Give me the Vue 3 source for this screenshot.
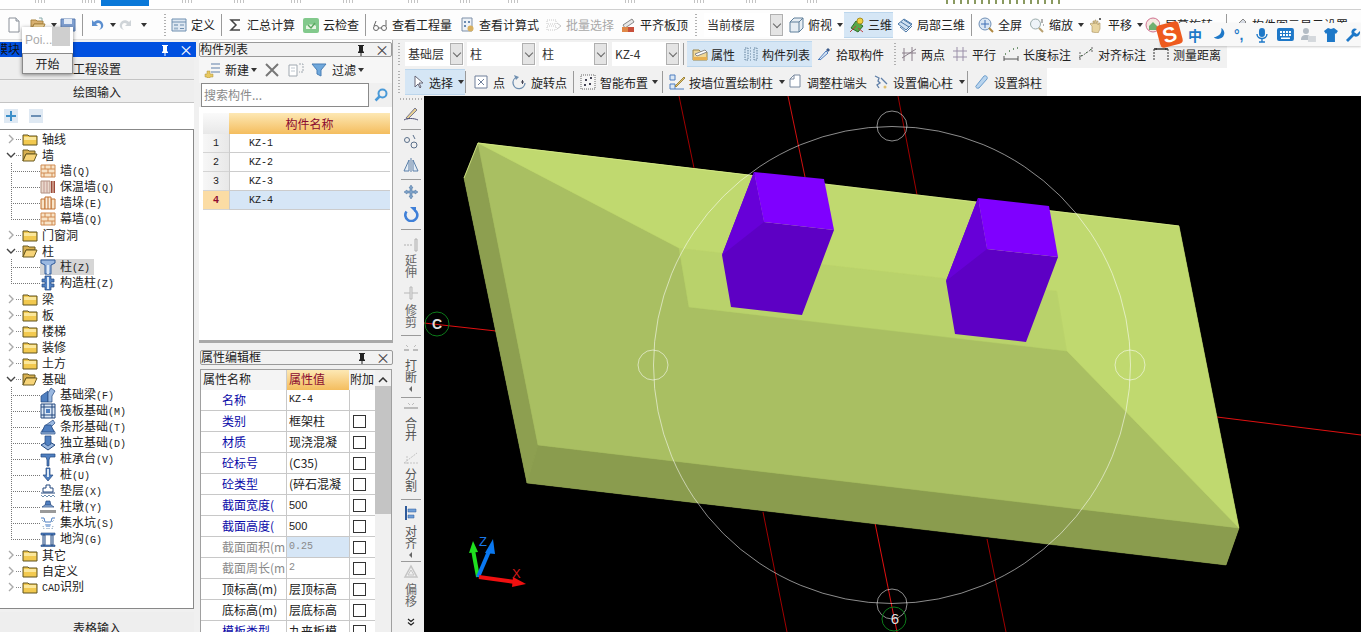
<template>
  <div class="app">
    <div class="menu">
      <span v-for="m in menus" :key="m.x" :class="['menu-cell', { active: m.on, tick: m.tick, olive: m.olive }]" :style="{ width: m.w + 'px' }"></span>
    </div>

    <div class="tb row1">
      <div v-for="c in row1" :key="c.x" :class="cellClass(c)" :style="{ width: c.w + 'px' }">
        <template v-if="c.combo"><span class="combo-text">{{ c.combo }}</span><span class="combo-arrow"></span></template>
        <svg v-if="c.i" class="ic" viewBox="0 0 16 16" v-html="icons[c.i]"></svg>
        <span v-if="c.t" class="lbl">{{ c.t }}</span>
      </div>
    </div>

    <div class="body">
      <aside class="left">
        <div class="title active"><span class="title-text nav-text">模块</span><svg class="pin" viewBox="0 0 10 12"><path d="M2 1h6v1H7v5l1 1v1H5.500v3h-1V9H2V8l1-1V2H2z" fill="#fff"/></svg><span class="close wht">×</span></div>
        <div class="tab">工程设置</div>
        <div class="tab">绘图输入</div>
        <div class="tree-tools">
          <span class="pm">
            <svg viewBox="0 0 14 14"><path d="M2 6h4V2h2v4h4v2H8v4H6V8H2z" fill="#3d8fc9"/></svg>
          </span>
          <span class="pm">
            <svg viewBox="0 0 14 14"><path d="M2 6h10v2H2z" fill="#6b8fb5"/></svg>
          </span>
        </div>
        <div class="tree">
          <template v-for="n in tree" :key="n.t">
            <div class="node">
              <svg class="chev" viewBox="0 0 10 10">
                <path v-if="n.kids" d="M1 3l4 4 4-4" fill="none" stroke="#444" stroke-width="1.400"/>
                <path v-else d="M3 1l4 4-4 4" fill="none" stroke="#aaa" stroke-width="1.400"/>
              </svg>
              <span class="dots"></span>
              <svg class="ic" viewBox="0 0 16 16" v-html="n.kids ? icons.folderOpen : icons.folder"></svg>
              <span class="node-text"><span v-if="n.pre" class="key">{{ n.pre }}</span>{{ n.t }}</span>
            </div>
            <div v-for="(k, i) in n.kids" :key="k.t" class="kid">
              <span :class="['elbow', { last: i === n.kids.length - 1 }]"></span>
              <span :class="['kid-body', { sel: k.sel }]">
                <svg class="ic" viewBox="0 0 16 16" v-html="icons[k.i]"></svg>
                <span class="kid-text">{{ k.t }}<span class="key">{{ k.k }}</span></span>
              </span>
            </div>
          </template>
        </div>
        <div class="tab last-tab">表格输入</div>
      </aside>

      <section class="mid">
        <div class="comp-panel">
          <div class="title"><span class="title-text">构件列表</span><svg class="pin" viewBox="0 0 10 12"><path d="M2 1h6v1H7v5l1 1v1H5.500v3h-1V9H2V8l1-1V2H2z" fill="#222"/></svg><span class="close">×</span></div>
          <div class="comp-tools">
            <svg class="ic" viewBox="0 0 16 16" v-html="icons.newItem"></svg>
            <span class="lbl new-lbl">新建</span><span class="arrow"></span>
            <svg class="ic del" viewBox="0 0 16 16"><path d="M2 2l12 12M14 2L2 14" stroke="#777" stroke-width="2"/></svg>
            <svg class="ic cp" viewBox="0 0 16 16" v-html="icons.copy"></svg>
            <svg class="ic fl" viewBox="0 0 16 16"><path d="M1 2h14L10 8v6l-4-2V8z" fill="#6fa8dc" stroke="#4a7fb5"/></svg>
            <span class="lbl flt-lbl">过滤</span><span class="arrow"></span>
          </div>
          <div class="search">
            <div class="search-input">搜索构件...</div>
            <div class="search-btn">
              <svg viewBox="0 0 16 16" width="16" height="16"><circle cx="9.500" cy="6.500" r="4" fill="none" stroke="#4a9ad8" stroke-width="2"/><path d="M6.500 9.500L2.500 13.500" stroke="#4a9ad8" stroke-width="2.500"/></svg>
            </div>
          </div>
          <div class="comp-table">
            <div class="ct-corner"></div><div class="ct-head">构件名称</div>
            <template v-for="(r, i) in comps" :key="r">
              <div :class="['ct-num', { on: i === 3 }]">{{ i + 1 }}</div>
              <div :class="['ct-cell', { on: i === 3 }]">{{ r }}</div>
            </template>
          </div>
        </div>

        <div class="prop-panel">
          <div class="title"><span class="title-text">属性编辑框</span><svg class="pin" viewBox="0 0 10 12"><path d="M2 1h6v1H7v5l1 1v1H5.500v3h-1V9H2V8l1-1V2H2z" fill="#222"/></svg><span class="close">×</span></div>
          <div class="prop-wrap">
            <div class="prop-table">
              <div class="ph">属性名称</div><div class="ph val-h">属性值</div><div class="ph extra-h">附加</div>
              <template v-for="p in props" :key="p.n">
                <div :class="['pn', { dis: p.dis, plain: p.plain }]">{{ p.n }}</div>
                <div :class="['pv', { dis: p.dis, hl: p.hl, mono: p.mono, sans: p.sans }]">{{ p.v }}</div>
                <div class="pc"><span v-if="!p.noChk" class="chk"></span></div>
              </template>
            </div>
            <div class="sb">
              <svg class="sb-up" viewBox="0 0 10 6"><path d="M1 5l4-4 4 4" fill="none" stroke="#333" stroke-width="1.500"/></svg>
              <div class="sb-thumb"></div>
            </div>
          </div>
        </div>
      </section>

      <main class="work">
        <div class="tb row2">
          <div v-for="c in row2" :key="c.x" :class="cellClass(c)" :style="{ width: c.w + 'px' }">
            <template v-if="c.combo"><span class="combo-text">{{ c.combo }}</span><span class="combo-arrow"></span></template>
            <svg v-if="c.i" class="ic" viewBox="0 0 16 16" v-html="icons[c.i]"></svg>
            <span v-if="c.t" class="lbl">{{ c.t }}</span>
          </div>
        </div>
        <div class="tb row3">
          <div v-for="c in row3" :key="c.x" :class="cellClass(c)" :style="{ width: c.w + 'px' }">
            <svg v-if="c.i" class="ic" viewBox="0 0 16 16" v-html="icons[c.i]"></svg>
            <span v-if="c.t" class="lbl">{{ c.t }}</span>
          </div>
        </div>
        <div class="stage">
          <div class="vbar">
            <div v-for="c in vbar" :key="c.x" :class="['vcell', { vsep: c.sep, vgrip: c.grip }]" :style="{ height: c.w + 'px' }">
              <svg v-if="c.i" class="ic" viewBox="0 0 16 16" v-html="icons[c.i]"></svg>
              <span v-if="c.t" :class="['vtext', { dark: c.dark }]">{{ c.t }}</span>
              <span v-if="c.tri" class="vtri"></span>
              <svg v-if="c.more" viewBox="0 0 8 8" width="8" height="8"><path d="M1 1l3 2.500L7 1M1 4.500L4 7l3-2.500" fill="none" stroke="#222" stroke-width="1.200"/></svg>
            </div>
          </div>
          <svg class="view" viewBox="424 96 937 536" width="937" height="536">
            <g fill="none">
              <path d="M679 96L694 168" stroke="#a00000"/>
              <path d="M788 96L805 177" stroke="#d01010"/>
              <path d="M898 96L917 195" stroke="#a00000"/>
              <path d="M424 323L496 331" stroke="#e01010"/>
              <path d="M1217 417L1361 435" stroke="#e01010"/>
              <path d="M763 512L787 632" stroke="#a00000"/>
              <path d="M875 523L897 632" stroke="#e01010"/>
              <path d="M987 539L1006 632" stroke="#a00000"/>
            </g>
            <!-- silhouette first, so the faces leave no dark seams between them -->
            <polygon points="478,143 1179,226 1239,528 1226,565 527,483 464,178" fill="#a9bf62" />
            <polygon points="478,143 464,178 527,483 538,445" fill="#8d9f50" stroke="#8d9f50" stroke-width=".5" />
            <polygon points="538,445 1239,528 1226,565 527,483" fill="#8a9c4e" stroke="#8a9c4e" stroke-width=".5" />
            <polygon points="478,143 679,248 689,307 1067,351 1239,528 538,445" fill="#a9bf62" stroke="#a9bf62" stroke-width=".5" />
            <polygon points="679,248 1057,291 1067,351 689,307" fill="#b9d26b" stroke="#b9d26b" stroke-width=".5" />
            <polygon points="478,143 1179,226 1239,528 1067,351 1057,291 679,248" fill="#c0d96f" stroke="#c0d96f" stroke-width=".5" />
            <path d="M464 178L478 143L1179 226" fill="none" stroke="#d9ee8a" stroke-width="0.800" />

            <circle cx="892" cy="365" r="238.500" fill="none" stroke="#fff" stroke-opacity=".55" />
            <g fill="none" stroke="#fff" stroke-opacity=".55">
              <circle cx="892" cy="126" r="15" />
              <circle cx="1130" cy="365" r="15" />
              <circle cx="653" cy="365" r="15" />
              <circle cx="892" cy="604" r="15" />
            </g>

            <polygon points="754,172 764,222 834,230 802,315 731,307 722,255" fill="#5d00c4" />
            <polygon points="754,172 764,222 722,255" fill="#6700d8" />
            <polygon points="754,172 824,179 834,230 764,222" fill="#7f00ff" />
            <polygon points="978,198 987,249 1058,257 1026,342 955,334 946,281" fill="#5d00c4" />
            <polygon points="978,198 987,249 946,281" fill="#6700d8" />
            <polygon points="978,198 1049,206 1058,257 987,249" fill="#7f00ff" />

            <g fill="none" stroke="#0d7a1a">
              <circle cx="437" cy="324" r="12" />
              <circle cx="894" cy="619" r="12" />
            </g>
            <text x="437" y="329" class="mark">C</text>
            <text x="895" y="624" class="mark six">6</text>

            <path d="M478 577L473 550" stroke="#1fe01f" stroke-width="4" />
            <polygon points="473,541 469,553 478,552" fill="#1fe01f" />
            <path d="M478 577L490 549" stroke="#0a78f0" stroke-width="4" />
            <polygon points="493,539 485,553 495,554" fill="#0a78f0" />
            <path d="M479 577L515 582" stroke="#f01010" stroke-width="4" />
            <polygon points="526,584 513,577 512,587" fill="#f01010" />
            <text x="479" y="546" class="ax z">Z</text>
            <text x="512" y="578" class="ax x">X</text>
          </svg>
        </div>
      </main>
    </div>

    <div class="popup">
      <div class="pop-top"><span class="pop-name">Poi...</span><span class="pop-thumb"></span></div>
      <div class="pop-btn">开始</div>
    </div>

    <div class="sogou">
      <span class="sg-logo"><span>S</span></span>
      <span class="sg-zh">中</span>
      <svg viewBox="0 0 16 16" width="15" height="15"><path d="M11 1c1 5-2 9-8 10 3 3 10 2 11-3 1-3-1-6-3-7z" fill="#1e78c8"/></svg>
      <span class="sg-punc">°,</span>
      <svg viewBox="0 0 16 16" width="16" height="16"><rect x="5" y="1" width="6" height="9" rx="3" fill="#1e78c8"/><path d="M3 7c0 6 10 6 10 0M8 12v3M5 15h6" fill="none" stroke="#1e78c8" stroke-width="1.400"/></svg>
      <svg viewBox="0 0 17 14" width="17" height="14"><rect width="17" height="13" rx="2" fill="#1e78c8"/><path d="M3 3h2v2H3zM6 3h2v2H6zM9 3h2v2H9zM12 3h2v2h-2zM3 6h2v2H3zM6 6h2v2H6zM9 6h2v2H9zM12 6h2v2h-2zM4 9.500h9V11H4z" fill="#fff"/></svg>
      <svg viewBox="0 0 16 16" width="16" height="16"><circle cx="6" cy="4" r="3" fill="#b4bcc4"/><path d="M1 13c0-4 2-5 5-5s5 1 5 5z" fill="#b4bcc4"/><rect x="8" y="9" width="8" height="6" fill="#d4d8dc"/></svg>
      <svg viewBox="0 0 16 16" width="16" height="16"><path d="M5 1l3 1 3-1 4 3-2 3-1-1v9H4V6L3 7 1 4z" fill="#1e78c8"/></svg>
      <svg viewBox="0 0 16 16" width="16" height="16"><path d="M15 4l-3 3-3-2 3-3c-3-2-7 1-5 5l-6 6 2 2 6-6c3 2 7-1 6-5z" fill="#1e78c8"/></svg>
    </div>
  </div>
</template>

<script setup>
function cells(list) {
  return list.slice(0, -1).map((c, i) => ({ ...c, w: list[i + 1].x - c.x }))
}

function cellClass(c) {
  return ['cell', {
    on: c.on, sep: c.sep, grip: c.grip, arrowcell: c.a, combo: c.combo, dis: c.dis,
  }]
}

// only the lower edge of the menu bar is left in the picture
const menus = cells([
  { x: 0 }, { x: 35, tick: 1 }, { x: 47 }, { x: 82, tick: 1 }, { x: 97 }, { x: 101, on: 1 }, { x: 149 }, { x: 182, tick: 1 }, { x: 194 },
  { x: 234, tick: 1 }, { x: 246 }, { x: 291, tick: 1 }, { x: 303 }, { x: 343, tick: 1 }, { x: 355 }, { x: 408, tick: 1 }, { x: 420 },
  { x: 460, tick: 1 }, { x: 472 }, { x: 508, tick: 1 }, { x: 520 }, { x: 625, tick: 1 }, { x: 637 }, { x: 694, tick: 1 }, { x: 706 },
  { x: 746, tick: 1 }, { x: 758 }, { x: 807, tick: 1 }, { x: 819 }, { x: 946, olive: 1 }, { x: 1063 }, { x: 1361 },
])

const row1 = cells([
  { x: 0 }, { x: 6, i: 'doc' }, { x: 30, i: 'open' }, { x: 49, a: 1 }, { x: 60, i: 'save' },
  { x: 82, sep: 1 }, { x: 89, i: 'undo' }, { x: 108, a: 1 }, { x: 118, i: 'redo' }, { x: 139, a: 1 },
  { x: 163, grip: 1 }, { x: 171, i: 'def', t: '定义' }, { x: 221, sep: 1 }, { x: 227, i: 'sigma', t: '汇总计算' },
  { x: 303, i: 'cloud', t: '云检查' }, { x: 365, sep: 1 }, { x: 372, i: 'glass', t: '查看工程量' },
  { x: 459, i: 'calc', t: '查看计算式' }, { x: 546, i: 'batch', t: '批量选择', dis: 1 }, { x: 620, i: 'flush', t: '平齐板顶' },
  { x: 694, grip: 1 }, { x: 704, combo: '当前楼层' }, { x: 784 }, { x: 788, i: 'cube', t: '俯视' }, { x: 835, a: 1 },
  { x: 844, i: 'tree3d', t: '三维', on: 1 }, { x: 893 }, { x: 897, i: 'local3d', t: '局部三维' }, { x: 971, sep: 1 },
  { x: 978, i: 'full', t: '全屏' }, { x: 1029, i: 'zoom', t: '缩放' }, { x: 1076, a: 1 }, { x: 1088, i: 'pan', t: '平移' },
  { x: 1135, a: 1 }, { x: 1145, i: 'orbit', t: '屏幕旋转' }, { x: 1226, sep: 1 }, { x: 1232, i: 'pencil', t: '构件图元显示设置' }, { x: 1361 },
])

const row2 = cells([
  { x: 397, grip: 1 }, { x: 405, combo: '基础层' }, { x: 464 }, { x: 467, combo: '柱' }, { x: 536 }, { x: 539, combo: '柱' },
  { x: 608 }, { x: 612, combo: 'KZ-4' }, { x: 680 }, { x: 683, sep: 1 }, { x: 687, i: 'attr', t: '属性', on: 1 },
  { x: 738, i: 'list', t: '构件列表', on: 1 }, { x: 812 }, { x: 816, i: 'pick', t: '拾取构件' }, { x: 893, grip: 1 },
  { x: 901, i: 'twoPts', t: '两点' }, { x: 952, i: 'parallel', t: '平行' }, { x: 1003, i: 'lenDim', t: '长度标注' },
  { x: 1078, i: 'alignDim', t: '对齐标注' }, { x: 1153, i: 'measure', t: '测量距离' }, { x: 1227 },
])

const row3 = cells([
  { x: 397, grip: 1 }, { x: 405, i: 'cursor', t: '选择', on: 1 }, { x: 456, a: 1, on: 1 }, { x: 465, sep: 1 }, { x: 473, i: 'point', t: '点' },
  { x: 511, i: 'rotPt', t: '旋转点' }, { x: 573, sep: 1 }, { x: 580, i: 'smart', t: '智能布置' }, { x: 650, a: 1 },
  { x: 662, sep: 1 }, { x: 669, i: 'wallCol', t: '按墙位置绘制柱' }, { x: 777, a: 1 }, { x: 787, i: 'adjust', t: '调整柱端头' },
  { x: 873, i: 'ecc', t: '设置偏心柱' }, { x: 957, a: 1 }, { x: 967, sep: 1 }, { x: 974, i: 'slant', t: '设置斜柱' }, { x: 1047 },
])

const vbar = cells([
  { x: 96, grip: 1 }, { x: 106, i: 'brush' }, { x: 128, sep: 1 }, { x: 133, i: 'offsetC' }, { x: 157, i: 'mirror' }, { x: 178, sep: 1 },
  { x: 184, i: 'move' }, { x: 206, i: 'rot' }, { x: 228, sep: 1 }, { x: 237, i: 'extend' }, { x: 254, t: '延伸' },
  { x: 285, i: 'trim' }, { x: 304, t: '修剪' }, { x: 334, sep: 1 }, { x: 342, i: 'brk' }, { x: 359, t: '打断', dark: 1 }, { x: 385, tri: 1 },
  { x: 396, sep: 1 }, { x: 399, i: 'merge' }, { x: 417, t: '合并', dark: 1 }, { x: 450, i: 'split' }, { x: 468, t: '分割', dark: 1 },
  { x: 498, sep: 1 }, { x: 505, i: 'alignV' }, { x: 525, t: '对齐', dark: 2 }, { x: 551, tri: 1 }, { x: 560, sep: 1 },
  { x: 564, i: 'offset' }, { x: 583, t: '偏移' }, { x: 618, more: 1 }, { x: 632 },
])

const tree = [
  { t: '轴线' },
  { t: '墙', kids: [
    { t: '墙', k: '(Q)', i: 'brick' }, { t: '保温墙', k: '(Q)', i: 'insul' },
    { t: '墙垛', k: '(E)', i: 'pier' }, { t: '幕墙', k: '(Q)', i: 'brick' },
  ] },
  { t: '门窗洞' },
  { t: '柱', kids: [
    { t: '柱', k: '(Z)', i: 'col', sel: 1 }, { t: '构造柱', k: '(Z)', i: 'gzz' },
  ] },
  { t: '梁' }, { t: '板' }, { t: '楼梯' }, { t: '装修' }, { t: '土方' },
  { t: '基础', kids: [
    { t: '基础梁', k: '(F)', i: 'fbeam' }, { t: '筏板基础', k: '(M)', i: 'raft' },
    { t: '条形基础', k: '(T)', i: 'strip' }, { t: '独立基础', k: '(D)', i: 'iso' },
    { t: '桩承台', k: '(V)', i: 'cap' }, { t: '桩', k: '(U)', i: 'pile' },
    { t: '垫层', k: '(X)', i: 'pad' }, { t: '柱墩', k: '(Y)', i: 'colPad' },
    { t: '集水坑', k: '(S)', i: 'sump' }, { t: '地沟', k: '(G)', i: 'trench' },
  ] },
  { t: '其它' }, { t: '自定义' }, { t: '识别', pre: 'CAD' },
]

const comps = ['KZ-1', 'KZ-2', 'KZ-3', 'KZ-4']

const props = [
  { n: '名称', v: 'KZ-4', mono: 1, noChk: 1 },
  { n: '类别', v: '框架柱' },
  { n: '材质', v: '现浇混凝' },
  { n: '砼标号', v: '(C35)' },
  { n: '砼类型', v: '(碎石混凝' },
  { n: '截面宽度(', v: '500', sans: 1 },
  { n: '截面高度(', v: '500', sans: 1 },
  { n: '截面面积(m', v: '0.25', dis: 1, hl: 1, mono: 1 },
  { n: '截面周长(m', v: '2', dis: 1, mono: 1 },
  { n: '顶标高(m)', v: '层顶标高', plain: 1 },
  { n: '底标高(m)', v: '层底标高', plain: 1 },
  { n: '模板类型', v: '九夹板模' },
]

const blue = 'fill="#4f7fc0" stroke="#24487f" stroke-width=".7"'
const bricks = '<path d="M1 2h14v12H1z" fill="#f8e4c8" stroke="#d08a50"/><path d="M1 6h14M1 10h14M5 2v4M11 2v4M8 6v4M4 10v4M12 10v4" stroke="#d08a50" fill="none"/>'

const icons = {
  doc: '<path d="M3 1h7l3 3v11H3z" fill="#fff" stroke="#8a9099"/><path d="M10 1v3h3" fill="#dde3ea" stroke="#8a9099"/>',
  open: '<path d="M1 3h5l1 1h6v3H4l-3 7z" fill="#d8b070" stroke="#a88440"/><path d="M4 7h11l-3 7H1z" fill="#f0d498" stroke="#a88440"/><path d="M9 1l3 0 0 3" fill="none" stroke="#8aa"/>',
  save: '<path d="M1 2h14v12H1z" fill="#7f9fd0" stroke="#5a7cb0"/><path d="M4 2h8v5H4z" fill="#e3ebf6"/><path d="M5 10h6v4H5z" fill="#5a78a8"/>',
  undo: '<path d="M3 3v6h6L7 7c2-2 5-1 5 2 0 2-1 3-2 4 3-1 5-3 4-6-1-4-6-5-9-2z" fill="#5c8fd0"/>',
  redo: '<path d="M13 3v6H7l2-2C7 5 4 6 4 9c0 2 1 3 2 4-3-1-5-3-4-6 1-4 6-5 9-2z" fill="#cfd4d8"/>',
  def: '<path d="M1 2h14v12H1z" fill="#dfe8f2" stroke="#6f8fb0"/><path d="M1 5h14" stroke="#6f8fb0"/><path d="M3 7h4v2H3zM3 10.500h4v2H3z" fill="#9db5cc"/><path d="M9 8h4M9 11.500h4" stroke="#6f8fb0"/>',
  sigma: '<path d="M13 3H4l5 5-5 5h9" fill="none" stroke="#444" stroke-width="1.500"/>',
  cloud: '<rect x="0" y="1" width="16" height="15" rx="2" fill="#82c98c"/><path d="M3 9c2-2 8-2 10 0v3H3z" fill="#e7f4e4"/><path d="M5 8l3 3 4-5" fill="none" stroke="#5aa860" stroke-width="1.500"/>',
  glass: '<circle cx="4" cy="11" r="2.500" fill="none" stroke="#666"/><circle cx="12" cy="11" r="2.500" fill="none" stroke="#666"/><path d="M6.500 11h3M2 9l2-5M14 9V3" stroke="#666" fill="none"/>',
  calc: '<path d="M3 1h10v13H3z" fill="#eef2f7" stroke="#7c8fa8"/><path d="M5 4h2v2H5zM9 4h2v2H9zM5 8h2v2H5z" fill="#6c8bb0"/><circle cx="11.500" cy="11.500" r="3" fill="#d8b060"/>',
  batch: '<path d="M1 3h9v4H1zM1 9h9v4H1z" fill="none" stroke="#c8c8c8" stroke-dasharray="1 1"/><path d="M11 6l4 3-4 3" fill="none" stroke="#c8c8c8"/>',
  flush: '<path d="M3 8l9-6 2 3-9 6z" fill="#e8e8e8" stroke="#888"/><path d="M2 10h12v5H2z" fill="#e08848"/><path d="M8 10h6v5H8z" fill="#c8503c"/>',
  cube: '<path d="M2 5l4-4h9v10l-4 4H2z" fill="#e6edf3" stroke="#5f7f9a"/><path d="M2 5h9v10M11 5l4-4" fill="none" stroke="#5f7f9a"/>',
  tree3d: '<path d="M2 11l5-7 7 5-5 6z" fill="#58a848" stroke="#2f6e2a"/><circle cx="11" cy="4" r="3" fill="#f0d040" stroke="#a89020"/><path d="M1 15l6-6M9 11l5 4" stroke="#c04040"/>',
  local3d: '<path d="M1 7l6-5 8 5-6 6z" fill="#cfe0f0" stroke="#4a78a8"/><path d="M4 5l8 5M7 3l8 5M3 10l6 5 6-6" fill="none" stroke="#4a78a8"/>',
  full: '<circle cx="7" cy="7" r="6" fill="#dbe7f4" stroke="#6f8fb5"/><path d="M7 3v8M3 7h8" stroke="#3f6fb5"/><path d="M11 11l4 4" stroke="#b08840" stroke-width="2"/>',
  zoom: '<circle cx="6.500" cy="7" r="5" fill="#eef3f8" stroke="#9aa"/><path d="M10 11l4 4" stroke="#b8a070" stroke-width="2"/><path d="M13 2v4M14 8h1" stroke="#666"/>',
  pan: '<path d="M4 15V9L2 7l1-1 2 1V4h1v3l1-4h1v4l1-3h1v4l1-2h1v6l-2 4z" fill="#e8d4a0" stroke="#a89060" stroke-width=".6"/><path d="M11 1l2 2M13 1l-2 2" stroke="#666"/>',
  orbit: '<circle cx="8" cy="8" r="7" fill="#f4e8e0" stroke="#d07090"/><path d="M4 9l4-4 4 4v4H4z" fill="#70b070"/>',
  pencil: '<path d="M2 14l2-5 7-7 3 3-7 7z" fill="#d8dce4" stroke="#888"/>',
  attr: '<path d="M1 4h6l2 2h6v8H1z" fill="#f0d898" stroke="#9a8448"/><path d="M3 8l10-4 2 2-10 4z" fill="#fff" stroke="#888"/><path d="M1 11h14v3H1z" fill="#e8b050"/>',
  list: '<path d="M2 2h3v12H2zM7 2h1M7 5h1M7 8h1M7 11h1M7 14h1M11 2h3v12h-3z" fill="none" stroke="#5f7f9a" stroke-dasharray="1.500 1"/>',
  pick: '<path d="M3 13l7-8 2 2-8 7z" fill="#dbe7f4" stroke="#4f7fc0"/><path d="M10 4l2-2 2 2-2 2z" fill="#3a5a8a"/><path d="M2 14l1-1" stroke="#4f7fc0"/>',
  twoPts: '<path d="M3 2v13M1 12l14-9M11 1v14M1 7h14" stroke="#8a7f8a" fill="none"/>',
  parallel: '<path d="M5 1v14M11 1v14M1 5h14M1 11h14" stroke="#9a8fa8" fill="none"/>',
  lenDim: '<path d="M1 13h14M1 10v5M15 10v5" stroke="#555" fill="none"/><path d="M2 8h1M6 5h1M10 3h1M14 2h1" stroke="#4a7a4a" stroke-width="1.500"/>',
  alignDim: '<path d="M1 12l13-9M2 6v8M14 1v5" stroke="#666" stroke-dasharray="2 1" fill="none"/><path d="M3 9l1 1M8 6l1 1M12 3l1 1" stroke="#4a7a4a"/>',
  measure: '<path d="M1 3v11M15 3v11" stroke="#333" stroke-dasharray="2 1" fill="none"/><path d="M1 3h14" stroke="#333" stroke-width="1.500"/><path d="M1 3l3-1v2zM15 3l-3-1v2z" fill="#333"/>',
  cursor: '<path d="M5 2v11l3-3 2 4 1-1-2-4h4z" fill="#fff" stroke="#667"/>',
  point: '<path d="M2 2h12v12H2z" fill="#fff" stroke="#6f7f9a"/><path d="M5 5l6 6M11 5l-6 6" stroke="#6f7f9a"/>',
  rotPt: '<path d="M14 9a6 6 0 1 1-8-6" fill="none" stroke="#6f8fb0" stroke-width="1.300"/><path d="M3 1l5 2-3 3z" fill="#6f8fb0"/><path d="M10 8h3M11.500 6v4" stroke="#445"/>',
  smart: '<path d="M1 1h14v14H1z" fill="#f6f6f6" stroke="#666" stroke-dasharray="1 1"/><path d="M5 5h2v2H5zM10 3h2v2h-2zM9 9h2v2H9zM4 10h2v2H4z" fill="#445"/>',
  wallCol: '<path d="M1 1h5v5H1zM1 10h5v5H1z" fill="#dbe7f4" stroke="#4f7fc0"/><path d="M6 12l9-9 1 1-9 9z" fill="#e0c070" stroke="#a08840"/><path d="M6 15h9" stroke="#4f7fc0"/>',
  adjust: '<path d="M3 5l4-4h6v12H3z" fill="#fff" stroke="#7a8aa0"/><path d="M3 5h4V1" fill="none" stroke="#7a8aa0"/>',
  ecc: '<path d="M2 2l4 2-1 3 2 2-3 2 2 3M8 4l6 6" fill="none" stroke="#5f7fa8" stroke-width="1.300"/><circle cx="12" cy="13" r="1.500" fill="#e0c070"/>',
  slant: '<path d="M2 12l8-10c2-1 4 1 3 3L5 14c-2 1-4-1-3-2z" fill="#b8d4ee" stroke="#6a9ccc"/>',
  brush: '<path d="M3 12l9-10 2 2-9 9z" fill="#e8d090" stroke="#7a7a90"/><path d="M1 14c3-2 10-2 14 0" stroke="#4a4a70" fill="none"/>',
  offsetC: '<circle cx="4" cy="7" r="2.500" fill="none" stroke="#5a6f8a"/><circle cx="11" cy="12" r="3" fill="none" stroke="#5a6f8a"/><path d="M10 2l2 4" stroke="#5a6f8a"/>',
  mirror: '<path d="M8 1v14" stroke="#5a7fa8"/><path d="M6 3v11H1zM10 3v11h5z" fill="#e4edf6" stroke="#5a7fa8"/>',
  move: '<path d="M8 1l2 3H9v3h3V6l3 2-3 2V9H9v3h1l-2 3-2-3h1V9H4v1L1 8l3-2v1h3V4H6z" fill="#7fa2c8" stroke="#4d74a0" stroke-width=".5"/>',
  rot: '<path d="M3.500 5.500a6 6 0 1 0 8-1.500" fill="none" stroke="#3f80d8" stroke-width="2.600"/><path d="M7 1l6 0 0 6z" fill="#3f80d8"/>',
  extend: '<path d="M1 8h8" stroke="#b0b0b0" stroke-dasharray="2 1"/><path d="M12 2h2v12h-2z" fill="#e8e8e8" stroke="#b0b0b0"/>',
  trim: '<path d="M1 8h14" stroke="#b8b8b8"/><path d="M7 2h2v12H7z" fill="#e8e8e8" stroke="#b8b8b8"/>',
  brk: '<path d="M1 8h5M10 8h5" stroke="#bcbcbc" stroke-width="2"/><path d="M3 3l2 2M13 3l-2 2" stroke="#bcbcbc"/>',
  merge: '<path d="M1 9h14" stroke="#bcbcbc" stroke-width="2"/><path d="M5 4l2 2M11 4L9 6" stroke="#bcbcbc"/>',
  split: '<path d="M1 13h14M1 13L14 3M4 6v8" stroke="#c4c4c4" stroke-dasharray="2 1" fill="none"/>',
  alignV: '<path d="M3 1v14" stroke="#2f5a9a" stroke-width="2"/><path d="M5 4h8v3H5zM5 10h6v3H5z" fill="#6f9fd8" stroke="#2f5a9a" stroke-width=".5"/>',
  offset: '<path d="M8 2l6 11H2z" fill="none" stroke="#c4c4c4" stroke-width="1.500"/><path d="M8 6l3 5H5z" fill="none" stroke="#c4c4c4"/>',
  newItem: '<path d="M7 2h9M7 6h9M7 10h9" stroke="#5f7fa8"/><path d="M3 9h3v3h3v3H6v1H3v-1H1v-3h2z" fill="#e8c860" stroke="#a89040" stroke-width=".5"/>',
  copy: '<path d="M1 3h8v11H1z" fill="#fff" stroke="#a0a8b0"/><path d="M3 6h4M3 9h4" stroke="#c0c8d0"/><path d="M11 2h4v8h-4" fill="none" stroke="#a0a8b0" stroke-dasharray="2 1"/>',
  folder: '<path d="M1 4h5l1 1h8v9H1z" fill="#f2c94f" stroke="#5e5220"/><path d="M2 6h12v3H2z" fill="#fbe79a"/>',
  folderOpen: '<path d="M1 3h5l1 1h6v3H4l-3 7z" fill="#d8b050" stroke="#6a5a20"/><path d="M4 7h11l-3 7H1z" fill="#f7d478" stroke="#6a5a20"/>',
  brick: bricks,
  insul: '<path d="M1 2h9v12H1z" fill="#ead8cc" stroke="#b09080"/><path d="M4 2v12M7 2v12" stroke="#c09890"/><path d="M11 2h4v12h-4z" fill="#9c4a3c"/><path d="M13 2v12" stroke="#f0d8c0"/>',
  pier: '<path d="M1 4h4v10H1zM11 4h4v10h-4z" fill="#f8e4c8" stroke="#c07030"/><path d="M5 2h6v12H5z" fill="#fbeedd" stroke="#c07030"/><path d="M8 2v12" stroke="#c07030"/>',
  col: '<path d="M1 1h14v3l-4 2v9H5V6L1 4z" fill="#9ab8e0" stroke="#2f5a9a"/><path d="M7 6h2v9H7z" fill="#dce8f6"/>',
  gzz: '<path d="M5 1h6v3h3v3h-3v2h3v3h-3v3H5v-3H2V9h3V7H2V4h3z" fill="#4f7fc0" stroke="#24487f" stroke-width=".7"/><path d="M7 2h2v12H7z" fill="#dce8f6"/>',
  fbeam: `<path d="M1 15V9l7-5v11z" ${blue}/><path d="M8 15V6l3-5 4 3-3 5v6z" fill="#9ab8e0" stroke="#24487f" stroke-width=".7"/>`,
  raft: '<path d="M1 1h14v14H1z" fill="#dce8f6" stroke="#24487f"/><path d="M4 1v14M12 1v14M1 4h14M1 12h14" stroke="#24487f"/><path d="M6 6h4v4H6z" fill="#4f7fc0"/>',
  strip: `<path d="M6 6l7-5 2 3-4 4 4 5v2H1v-2z" fill="#9ab8e0" stroke="#24487f" stroke-width=".7"/><path d="M5 6h6l3 7H2z" ${blue}/>`,
  iso: `<path d="M1 10l7-4 7 4-7 5z" fill="#9ab8e0" stroke="#24487f"/><path d="M5 1h6v8l-3 2-3-2z" ${blue}/>`,
  cap: `<path d="M1 3h14v3H10l-1 3v6H7V9L6 6H1z" ${blue}/>`,
  pile: `<path d="M6 1h4v7h3l-5 6-5-6h3z" ${blue}/><path d="M7 2h2v8H7z" fill="#dce8f6"/>`,
  pad: '<path d="M6 2h4v3h3v4H3V5h3z" fill="#fff" stroke="#24487f"/><path d="M1 10h14" stroke="#24487f"/><path d="M1 12l2 2 2-2 2 2 2-2 2 2 2-2 2 2" fill="none" stroke="#6f8fb0"/>',
  colPad: `<path d="M6 2h4l1 5H5z" ${blue}/><path d="M2 8l3-2h6l3 2z" fill="#9ab8e0" stroke="#24487f" stroke-width=".7"/><path d="M0 11h16v3H0z" fill="#9a9a9a"/>`,
  sump: '<path d="M1 3h3l1 4h6l1-4h3" fill="none" stroke="#4f7fc0"/><path d="M5 9h6l-1 3H6z" fill="#9ab8e0"/><path d="M2 5l2 2M12 7l2-2M3 11l1 3M12 14l1-3M7 13v2M9 13v2" stroke="#6f8fb0" stroke-dasharray="1 1"/>',
  trench: '<path d="M1 2h14v2H1zM1 14h14v1.500H1z" fill="#4f7fc0" stroke="#24487f" stroke-width=".6"/><path d="M3 4h2v10H3zM11 4h2v10h-2z" fill="#dce8f6" stroke="#24487f"/>',
}
</script>

<style scoped>
.app {
  position: relative;
  width: 1361px;
  height: 632px;
  overflow: hidden;
  display: flex;
  flex-direction: column;
  background: #f0f0f0;
  color: #222;
  font: 12px/16px "Noto Sans CJK SC", "Liberation Sans", sans-serif;
}
.ic { width: 16px; height: 16px; flex: none; }

.menu {
  height: 9px;
  flex: none;
  overflow: hidden;
  display: flex;
  background: #fff;
  border-bottom: 1px solid #d0d0d0;
}
.menu-cell { flex: none; height: 9px; }
.menu-cell.active { height: 6px; background: #0a78d8; }
.menu-cell.tick {
  height: 3px;
  background: repeating-linear-gradient(90deg, #c4c4c4 0 1px, transparent 1px 3px);
}
.menu-cell.olive {
  height: 4px;
  background: repeating-linear-gradient(90deg, #8a9a60 0 2px, transparent 2px 7px);
}

.tb { display: flex; align-items: center; flex: none; }
.row1 { height: 29px; background: #fdfdfd; border-bottom: 1px solid #e0e0e0; }
.row2 { height: 28px; width: 830px; background: #f1f1f1; }
.row3 { height: 28px; width: 650px; background: #f1f1f1; }
.row2 .lbl, .row3 .lbl { padding-top: 2px; }
.cell {
  flex: none;
  display: flex;
  align-items: center;
  gap: 4px;
  height: 100%;
  box-sizing: border-box;
  white-space: nowrap;
  overflow: hidden;
}
.lbl { flex: none; }
.cell.dis { color: #a8a8a8; }
.cell.on {
  background: #d5e6f5;
  padding-left: 5px;
  height: 26px;
  gap: 3px;
  border: 1px solid #bcd6ec;
  border-width: 1px 0;
}
.cell.on.arrowcell { padding-left: 0; }
.cell.sep::before {
  content: "";
  width: 1px;
  height: 22px;
  background: #9a9a9a;
}
.cell.grip::before {
  content: "";
  margin-left: 1px;
  width: 2px;
  height: 22px;
  background: repeating-linear-gradient(#b0b0b0 0 1px, transparent 1px 3px);
}
.cell.arrowcell::before,
.arrow {
  content: "";
  margin-left: 2px;
  flex: none;
  width: 0;
  height: 0;
  border: 3px solid transparent;
  border-top: 4px solid #333;
  border-bottom: 0;
}
.cell.combo {
  background: #fff;
  height: 24px;
  justify-content: space-between;
  padding: 0 1px 0 3px;
}
.combo-text { color: #333; }
.combo-arrow {
  width: 13px;
  height: 22px;
  box-sizing: border-box;
  border: 1px solid #b0b0b0;
  background: #e4e4e4;
  position: relative;
}
.combo-arrow::after {
  content: "";
  position: absolute;
  left: 3px;
  top: 6px;
  width: 5px;
  height: 5px;
  border: solid #666;
  border-width: 0 1px 1px 0;
  transform: rotate(45deg);
}

.body { flex: 1; display: flex; min-height: 0; }

.title {
  height: 15px;
  margin-top: 2px;
  flex: none;
  display: flex;
  align-items: center;
  background: #f2f2f2;
  border: 1px solid #9a9a9a;
  border-radius: 2px;
  box-sizing: border-box;
  font-size: 12px;
  overflow: hidden;
}
.title.active { background: #0050e0; border-color: #0050e0; border-radius: 0; }
.title-text { flex: 1; min-width: 0; white-space: nowrap; line-height: 13px; margin-top: -2px; }
.nav-text { margin-left: -5px; color: #111; }
.pin { width: 10px; height: 12px; margin-right: 9px; flex: none; }
.close { width: 14px; margin-right: 2px; font-size: 14px; line-height: 13px; text-align: center; color: #444; flex: none; }
.close.wht { color: #fff; }

.left { width: 196px; flex: none; display: flex; flex-direction: column; }
.tab {
  height: 22px;
  flex: none;
  margin-right: 2px;
  margin-top: 1px;
  box-sizing: border-box;
  display: flex;
  align-items: center;
  justify-content: center;
  background: #eee;
  border-bottom: 1px solid #c4c4c4;
  font-size: 12px;
}
.tree-tools {
  height: 27px;
  flex: none;
  margin-right: 2px;
  box-sizing: border-box;
  display: flex;
  align-items: center;
  gap: 11px;
  padding-left: 4px;
  background: #fff;
  border-bottom: 1px solid #888;
}
.pm {
  width: 14px;
  height: 14px;
  background: #dfe9f3;
  display: flex;
}
.tree {
  flex: 1;
  min-height: 0;
  margin-right: 2px;
  padding-top: 1px;
  background: #fff;
  border-right: 1px solid #888;
  border-bottom: 1px solid #888;
  box-sizing: border-box;
  font-size: 12px;
}
.node, .kid { height: 16px; display: flex; align-items: center; white-space: nowrap; }
.chev { width: 10px; height: 10px; margin-left: 6px; flex: none; }
.dots {
  width: 6px;
  margin-right: 0;
  height: 1px;
  flex: none;
  background: repeating-linear-gradient(90deg, #888 0 1px, transparent 1px 2px);
}
.node-text { margin-left: 4px; }
.key { font: 10px/16px "Liberation Mono", monospace; }
.elbow {
  width: 29px;
  height: 16px;
  margin-left: 11px;
  flex: none;
  background:
    repeating-linear-gradient(90deg, #777 0 1px, transparent 1px 2px) 0 8px / 100% 1px no-repeat,
    repeating-linear-gradient(#777 0 1px, transparent 1px 2px) 0 0 / 1px 100% no-repeat;
}
.elbow.last {
  background:
    repeating-linear-gradient(90deg, #777 0 1px, transparent 1px 2px) 0 8px / 100% 1px no-repeat,
    repeating-linear-gradient(#777 0 1px, transparent 1px 2px) 0 0 / 1px 8px no-repeat;
}
.kid-body { display: flex; align-items: center; height: 16px; padding-right: 4px; }
.kid-body.sel { background: #d6d6d6; }
.kid-text { margin-left: 4px; }
.last-tab { margin-top: 3px; height: 12px; padding-top: 8px; overflow: hidden; align-items: flex-start; border: 0; box-sizing: content-box; }

.mid { width: 194px; margin-left: 3px; flex: none; display: flex; flex-direction: column; background: #fff; }
.comp-panel {
  height: 303px;
  box-sizing: border-box;
  flex: none;
  border-bottom: 3px solid #a8a8a8;
  border-right: 1px solid #a8a8a8;
  background: #fff;
}
.comp-tools {
  height: 26px;
  display: flex;
  align-items: center;
  padding-left: 5px;
  background: #f6f6f6;
}
.new-lbl { margin-left: 5px; }
.del { margin-left: 7px; }
.cp { margin-left: 8px; }
.fl { margin-left: 7px; }
.flt-lbl { margin-left: 5px; }
.search { display: flex; height: 24px; padding-left: 2px; background: #f0f0f0; }
.search-input {
  width: 168px;
  border: 1px solid #8a8a8a;
  box-sizing: border-box;
  background: #fff;
  color: #8a8a8a;
  padding: 3px 2px;
}
.search-btn { flex: 1; display: flex; align-items: center; justify-content: center; }
.comp-table {
  margin: 6px 2px 0 4px;
  display: grid;
  grid-template-columns: 26px 1fr;
  grid-template-rows: 21px;
  grid-auto-rows: 19px;
  background: #fff;
}
.ct-corner { background: linear-gradient(#fafafa, #e8e8e8); }
.ct-head {
  text-align: center;
  line-height: 21px;
  color: #8b0a30;
  background: linear-gradient(#fde8b4, #f4bd5e);
}
.ct-num {
  text-align: center;
  font: 10px/20px "Liberation Mono", monospace;
  background: linear-gradient(90deg, #f7f7f7, #e8e8e8);
  border-bottom: 1px solid #d4d4d4;
}
.ct-num.on { background: #fbdca4; color: #8b0a30; font-weight: 700; }
.ct-cell {
  padding-left: 19px;
  font: 10px/20px "Liberation Mono", monospace;
  border-bottom: 1px solid #ccc;
  border-left: 1px solid #ccc;
}
.ct-cell.on { background: #d6e6f6; }

.prop-panel { flex: 1; min-height: 0; padding: 5px 0 0 1px; background: #f0f0f0; overflow: hidden; }
.prop-wrap {
  display: flex;
  margin-top: 4px;
  margin-right: 1px;
  border: 1px solid #a0a0a0;
  background: #fff;
  height: 300px;
  box-sizing: border-box;
}
.prop-table {
  width: 174px;
  display: grid;
  grid-template-columns: 85px 63px 26px;
  grid-template-rows: 20px;
  grid-auto-rows: 21px;
  flex: none;
}
.ph {
  display: flex;
  align-items: center;
  padding: 0 0 3px 2px;
  box-sizing: border-box;
  background: #f4f4f4;
  overflow: hidden;
  white-space: nowrap;
  font-size: 12px;
}
.val-h { background: linear-gradient(#fde8b4, #f4bd5e); color: #8b0a30; border-left: 1px solid #ccc; }
.extra-h { padding-left: 1px; background: #f4f4f4; }
.pn, .pv, .pc {
  border-bottom: 1px solid #c8c8c8;
  overflow: hidden;
  white-space: nowrap;
  box-sizing: border-box;
  line-height: 20px;
}
.pn { padding-left: 21px; color: #0a0aa8; }
.pn.dis { color: #8a8a8a; }
.pn.plain { color: #222; }
.pv { padding-left: 2px; border-left: 1px solid #c8c8c8; }
.pv.mono { font: 10px/20px "Liberation Mono", monospace; }
.pv.sans { font: 11px/20px "Liberation Sans", sans-serif; }
.pv.dis { color: #8a8a8a; }
.pv.hl { background: #d6e6f6; }
.pc { border-left: 1px solid #c8c8c8; padding: 4px 0 0 3px; }
.chk { display: block; width: 13px; height: 13px; border: 1px solid #333; box-sizing: border-box; background: #fff; }
.sb { flex: 1; background: #f0f0f0; display: flex; flex-direction: column; align-items: center; }
.sb-up { width: 10px; height: 6px; margin: 7px 0 3px; }
.sb-thumb { width: 100%; height: 128px; background: #c4c4c4; }

.work { flex: 1; min-width: 0; margin-left: 4px; display: flex; flex-direction: column; background: #fff; }
.stage { flex: 1; min-height: 0; display: flex; }
.vbar { width: 27px; flex: none; background: #f0f0f0; }
.vcell { display: flex; flex-direction: column; align-items: center; overflow: hidden; box-sizing: border-box; }
.vcell.vsep::before { content: ""; width: 20px; height: 1px; background: #9a9a9a; margin-top: 1px; }
.vcell.vgrip::before {
  content: "";
  width: 22px;
  height: 2px;
  margin-top: 2px;
  background: repeating-linear-gradient(90deg, #b0b0b0 0 1px, transparent 1px 3px);
}
.vtext {
  writing-mode: vertical-rl;
  text-orientation: upright;
  line-height: 14px;
  letter-spacing: 0;
  color: #666;
}
.vtext.dark { color: #555; }
.vtri {
  margin-top: 1px;
  width: 0;
  height: 0;
  border: 3px solid transparent;
  border-right: 3px solid #666;
  border-left: 0;
}
.view { display: block; flex: none; background: #000; }
.mark {
  font: 700 14px "Liberation Sans", sans-serif;
  fill: #ddd;
  text-anchor: middle;
}
.mark.six { font-weight: 400; font-size: 15px; }
.ax { font: 13px "Liberation Sans", sans-serif; }
.ax.z { fill: #1a78e8; }
.ax.x { fill: #d01818; }

.popup {
  position: absolute;
  left: 22px;
  top: 27px;
  width: 51px;
  height: 47px;
  background: #fff;
  box-shadow: 0 1px 4px rgba(0, 0, 0, .45);
}
.pop-top { display: flex; height: 26px; align-items: center; }
.pop-name { margin-left: 3px; color: #aaa; width: 27px; font: 12px "Liberation Sans", sans-serif; }
.pop-thumb { width: 18px; height: 19px; margin-top: -8px; background: #cfcfcf; }
.pop-btn {
  height: 21px;
  line-height: 20px;
  text-align: center;
  background: #f0f0f0;
  border: 1px solid #8a8a8a;
  box-sizing: border-box;
  font-size: 12px;
}

.sogou {
  position: absolute;
  left: 1160px;
  top: 23px;
  width: 201px;
  height: 23px;
  display: flex;
  align-items: center;
  gap: 6.500px;
  padding-left: 28px;
  box-sizing: border-box;
  background: #f8f8f8;
  box-shadow: 0 1px 2px rgba(0, 0, 0, .2);
}
.sg-logo {
  position: absolute;
  left: -2px;
  top: 0;
  width: 23px;
  height: 23px;
  border-radius: 4px;
  background: #ee5a1e;
  transform: rotate(-15deg);
  display: flex;
  align-items: center;
  justify-content: center;
  color: #fff;
  font: 900 21px/23px "Liberation Sans", sans-serif;
}
.sg-zh { color: #1e78c8; font-weight: 700; font-size: 14px; margin-right: 2px; }
.sg-punc { color: #1e78c8; font: 700 14px/16px "Liberation Sans", sans-serif; width: 14px; margin-left: 2px; }
</style>

<style>
html, body { margin: 0; overflow: hidden; }
</style>
